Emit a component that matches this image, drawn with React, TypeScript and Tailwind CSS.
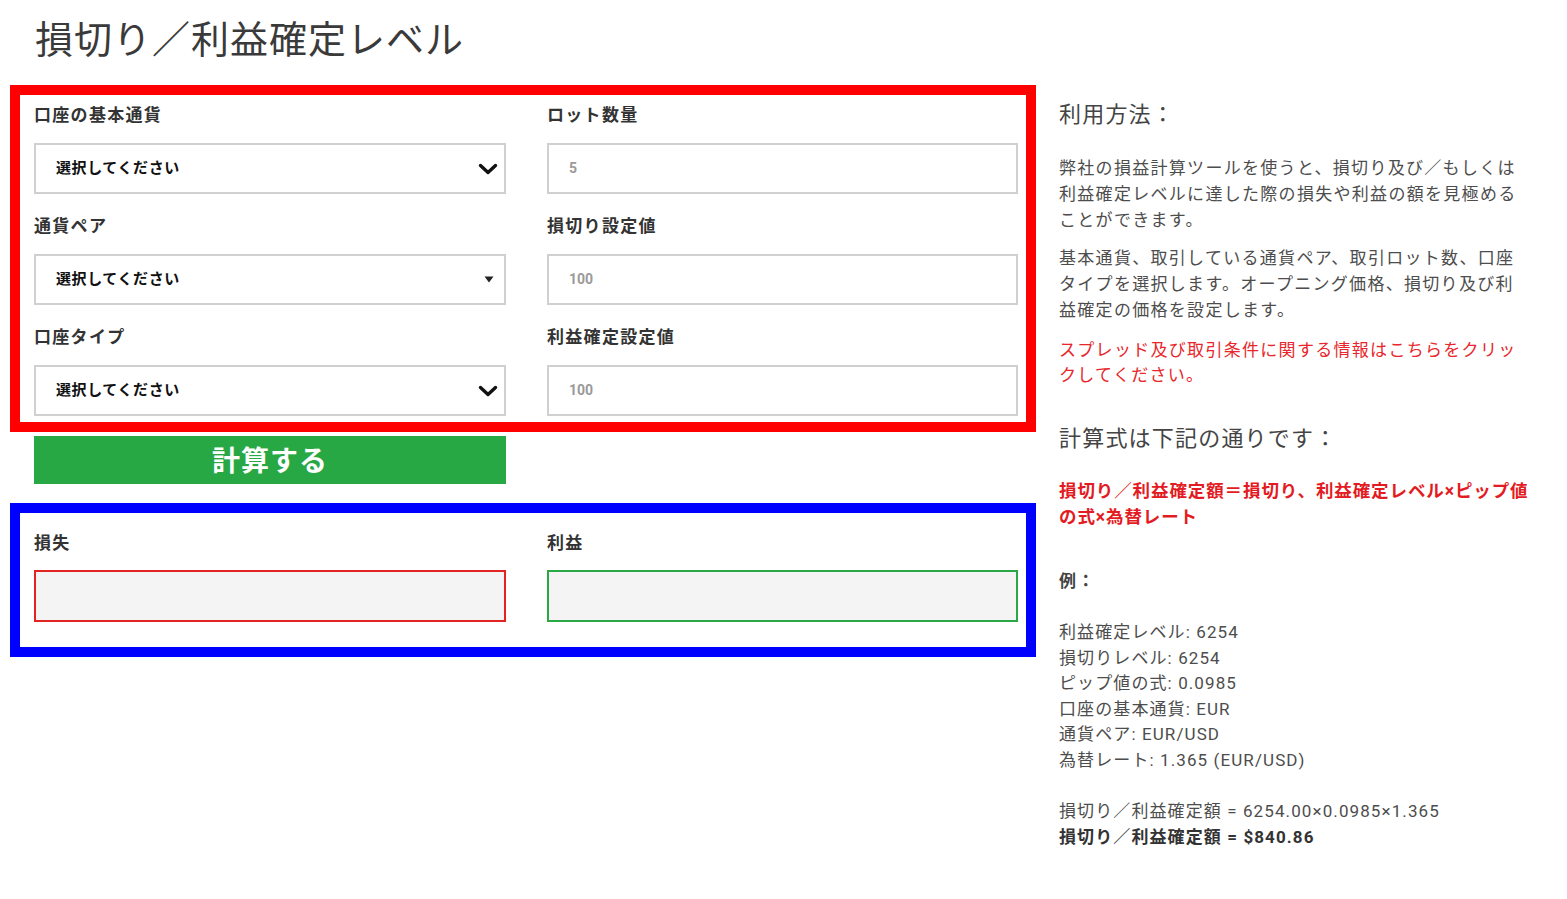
import React from "react";

const FONT = { fontFamily: 'Roboto, "Noto Sans CJK JP", sans-serif' };

function Chevron() {
  return (
    <svg width="20" height="14" viewBox="0 0 20 14" className="shrink-0">
      <path d="M2.5 3.5 L10 10.5 L17.5 3.5" fill="none" stroke="#111" strokeWidth="3.4" strokeLinecap="round" strokeLinejoin="round" />
    </svg>
  );
}

function Caret() {
  return (
    <svg width="10" height="7" viewBox="0 0 10 7" className="shrink-0 mr-[4px]">
      <path d="M0.5 0.5 L9.5 0.5 L5 6.5 Z" fill="#222" />
    </svg>
  );
}

function Label({ children }: { children: React.ReactNode }) {
  return <div className="h-[22px] leading-[22px] text-[17px] font-bold tracking-[1.3px] text-[#333] mb-[17px]">{children}</div>;
}

function SelectBox({ caret }: { caret?: boolean }) {
  return (
    <div className="h-[51px] border-2 border-[#d0d0d0] bg-white flex items-center justify-between pl-[20px] pr-[6px]">
      <span className="text-[15px] font-bold tracking-[0.6px] text-[#111]">選択してください</span>
      {caret ? <Caret /> : <Chevron />}
    </div>
  );
}

function InputBox({ value }: { value: string }) {
  return (
    <div className="h-[51px] border-2 border-[#d0d0d0] bg-white flex items-center pl-[20px]">
      <span className="text-[14px] font-bold text-[#9a9a9a]">{value}</span>
    </div>
  );
}

export default function App() {
  return (
    <div className="w-[1567px] h-[899px] bg-white flex pl-[10px]" style={FONT}>
      {/* Left column */}
      <div className="w-[1026px] flex flex-col">
        <h1 className="ml-[25px] mt-[15px] mb-[20px] h-[50px] leading-[50px] text-[38px] font-normal tracking-[1px] text-[#3a3a3a]">
          損切り／利益確定レベル
        </h1>

        <div className="border-[10px] border-[#ff0000] pl-[14px] pr-[8px] pt-[9px] pb-[6px]">
          <div className="grid grid-cols-[472px_471px] gap-x-[41px]">
            <div>
              <Label>口座の基本通貨</Label>
              <div className="mb-[21px]"><SelectBox /></div>
              <Label>通貨ペア</Label>
              <div className="mb-[21px]"><SelectBox caret /></div>
              <Label>口座タイプ</Label>
              <SelectBox />
            </div>
            <div>
              <Label>ロット数量</Label>
              <div className="mb-[21px]"><InputBox value="5" /></div>
              <Label>損切り設定値</Label>
              <div className="mb-[21px]"><InputBox value="100" /></div>
              <Label>利益確定設定値</Label>
              <InputBox value="100" />
            </div>
          </div>
        </div>

        <button className="ml-[24px] mt-[4px] w-[472px] h-[48px] pt-[3px] bg-[#28a745] text-white text-[28px] font-bold tracking-[1px] flex items-center justify-center">
          計算する
        </button>

        <div className="mt-[19px] border-[10px] border-[#0000ff] pl-[14px] pr-[8px] pt-[19px] pb-[25px]">
          <div className="grid grid-cols-[472px_471px] gap-x-[41px]">
            <div>
              <div className="h-[22px] leading-[22px] text-[17px] font-bold tracking-[1.2px] text-[#333] mb-[16px]">損失</div>
              <div className="h-[52px] border-2 border-[#e32222] bg-[#f4f4f4]" />
            </div>
            <div>
              <div className="h-[22px] leading-[22px] text-[17px] font-bold tracking-[1.2px] text-[#333] mb-[16px]">利益</div>
              <div className="h-[52px] border-2 border-[#2aa845] bg-[#f4f4f4]" />
            </div>
          </div>
        </div>
      </div>

      {/* Right column */}
      <div className="ml-[23px] mt-[100px] w-[470px] text-[17px] tracking-[1.3px] text-[#4d4d4d]">
        <h2 className="h-[30px] leading-[30px] text-[22px] font-normal tracking-[1.2px] text-[#444] mb-[25px]">利用方法：</h2>
        <p className="leading-[26px] mb-[12px]">
          弊社の損益計算ツールを使うと、損切り及び／もしくは利益確定レベルに達した際の損失や利益の額を見極めることができます。
        </p>
        <p className="leading-[26px] mb-[15px]">
          基本通貨、取引している通貨ペア、取引ロット数、口座タイプを選択します。オープニング価格、損切り及び利益確定の価格を設定します。
        </p>
        <p className="leading-[25px] text-[#e8262b]">
          スプレッド及び取引条件に関する情報はこちらをクリックしてください。
        </p>
        <h2 className="mt-[36px] h-[30px] leading-[30px] text-[22px] font-normal tracking-[1.2px] text-[#444]">計算式は下記の通りです：</h2>
        <p className="mt-[24px] leading-[26px] font-bold text-[#e31b23] tracking-[0.9px] text-[17.5px]">
          損切り／利益確定額＝損切り、利益確定レベル×ピップ値の式×為替レート
        </p>
        <p className="mt-[38px] leading-[26px] font-bold text-[#444]">例：</p>
        <div className="mt-[26px] leading-[25.6px] tracking-[1.1px]">
          <div>利益確定レベル: 6254</div>
          <div>損切りレベル: 6254</div>
          <div>ピップ値の式: 0.0985</div>
          <div>口座の基本通貨: EUR</div>
          <div>通貨ペア: EUR/USD</div>
          <div>為替レート: 1.365 (EUR/USD)</div>
          <div className="h-[25.6px]" />
          <div>損切り／利益確定額 = 6254.00×0.0985×1.365</div>
          <div className="font-bold text-[#333]">損切り／利益確定額 = $840.86</div>
        </div>
      </div>
    </div>
  );
}
